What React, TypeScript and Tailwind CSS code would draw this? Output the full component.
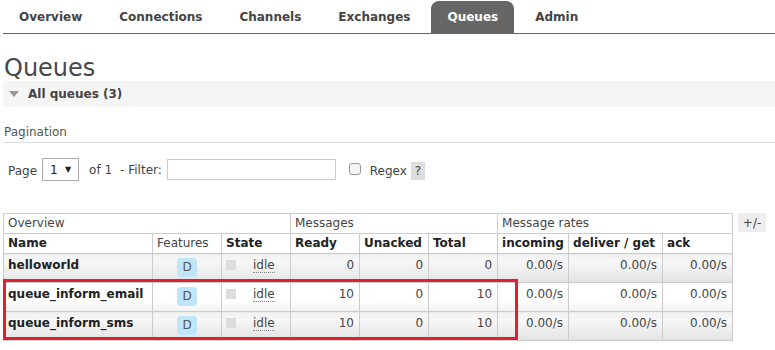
import React from "react";

const tabs = ["Overview", "Connections", "Channels", "Exchanges", "Queues", "Admin"];

type Row = { name: string; ready: string; unacked: string; total: string; alt: 1 | 2 };
const rows: Row[] = [
  { name: "helloworld", ready: "0", unacked: "0", total: "0", alt: 1 },
  { name: "queue_inform_email", ready: "10", unacked: "0", total: "10", alt: 2 },
  { name: "queue_inform_sms", ready: "10", unacked: "0", total: "10", alt: 1 },
];

export default function App() {
  return (
    <div
      className="w-[775px] h-[350px] overflow-hidden bg-white text-[12px] text-[#444] pl-[3px]"
      style={{ fontFamily: '"DejaVu Sans", Verdana, sans-serif' }}
    >
      {/* Menu */}
      <div className="flex gap-[5px] pt-[1px] border-b border-[#666]">
        {tabs.map((t) =>
          t === "Queues" ? (
            <div
              key={t}
              className="h-[32px] px-[16px] flex items-center rounded-t-[8px] bg-[#666] text-white font-bold"
            >
              {t}
            </div>
          ) : (
            <div key={t} className="h-[32px] px-[16px] flex items-center text-[#444] font-bold">
              {t}
            </div>
          )
        )}
      </div>

      <h1 className="mt-[22px] text-[24px] leading-[25px] font-normal text-[#484848] pl-[1px]">Queues</h1>

      <div className="h-[26px] bg-[#f5f5f5] flex items-center pl-[6px] gap-[9px]">
        <svg width="10" height="6" viewBox="0 0 10 6">
          <polygon points="0,0 10,0 5,6" fill="#999" />
        </svg>
        <span className="font-bold text-[#444]">All queues (3)</span>
      </div>

      <div className="mt-[18px] pb-[2px] border-b border-[#ddd] leading-[15px] text-[#555] pl-[1px]">
        Pagination
      </div>

      <div className="mt-[15px] h-[23px] flex items-center pl-[5px] text-[#444]">
        <span className="mt-[2px]">Page</span>
        <div className="ml-[5px] w-[37px] h-[23px] border border-[#aaa] flex items-center justify-between px-[7px]">
          <span className="text-[#222]">1</span>
          <span className="text-[8px] text-[#222]">▼</span>
        </div>
        <span className="ml-[10px]">of 1</span>
        <span className="ml-[8px]">- Filter:</span>
        <div className="ml-[5px] w-[169px] h-[21px] border border-[#ccc]" />
        <div className="ml-[13px] w-[12px] h-[12px] rounded-[3px] border border-[#999] bg-[#f4f4f4] -mt-[2px]" />
        <span className="ml-[9px] mt-[2px]">Regex</span>
        <div className="ml-[4px] w-[14px] h-[18px] bg-[#ddd] flex items-center justify-center mt-[2px]">?</div>
      </div>

      <div className="mt-[32px] flex items-start gap-[5px]">
        <div className="relative">
          <table className="table-fixed border-collapse w-[729px]">
            <colgroup>
              <col className="w-[149px]" />
              <col className="w-[69px]" />
              <col className="w-[69px]" />
              <col className="w-[69px]" />
              <col className="w-[69px]" />
              <col className="w-[69px]" />
              <col className="w-[71px]" />
              <col className="w-[94px]" />
              <col className="w-[70px]" />
            </colgroup>
            <thead>
              <tr className="h-[20px]">
                <th colSpan={3} className="border border-[#ccc] px-[4px] text-left font-normal text-[#444] leading-[15px]">
                  Overview
                </th>
                <th colSpan={3} className="border border-[#ccc] px-[4px] text-left font-normal text-[#444] leading-[15px]">
                  Messages
                </th>
                <th colSpan={3} className="border border-[#ccc] px-[4px] text-left font-normal text-[#444] leading-[15px]">
                  Message rates
                </th>
              </tr>
              <tr className="h-[20px]">
                <th className="border border-[#ccc] px-[4px] text-left font-bold text-[#222] leading-[15px]">Name</th>
                <th className="border border-[#ccc] px-[4px] text-left font-normal text-[#444] leading-[15px]">Features</th>
                <th className="border border-[#ccc] px-[4px] text-left font-bold text-[#222] leading-[15px]">State</th>
                <th className="border border-[#ccc] px-[4px] text-left font-bold text-[#222] leading-[15px]">Ready</th>
                <th className="border border-[#ccc] px-[4px] text-left font-bold text-[#222] leading-[15px]">Unacked</th>
                <th className="border border-[#ccc] px-[4px] text-left font-bold text-[#222] leading-[15px]">Total</th>
                <th className="border border-[#ccc] px-[4px] text-left font-bold text-[#222] leading-[15px]">incoming</th>
                <th className="border border-[#ccc] px-[4px] text-left font-bold text-[#222] leading-[15px] whitespace-nowrap">deliver / get</th>
                <th className="border border-[#ccc] px-[4px] text-left font-bold text-[#222] leading-[15px]">ack</th>
              </tr>
            </thead>
            <tbody>
              {rows.map((r) => {
                const bg =
                  r.alt === 1
                    ? "bg-[linear-gradient(#f2f2f2,#f7f7f7_25%,#ececec_70%,#e2e2e2)]"
                    : "bg-[linear-gradient(#ffffff,#ffffff_60%,#f2f2f2)]";
                const td = `border border-[#ccc] align-top leading-[15px] pt-[4px] ${bg}`;
                return (
                  <tr key={r.name} className="h-[29px]">
                    <td className={`${td} px-[4px] font-bold text-[#222] whitespace-nowrap`}>{r.name}</td>
                    <td className={`${td} px-[4px]`}>
                      <div className="mx-auto w-[20px] h-[19px] rounded-[4px] bg-[#bfe5f8] flex items-center justify-center text-[#555]">
                        D
                      </div>
                    </td>
                    <td className={`${td} px-[4px]`}>
                      <div className="flex items-start">
                        <div className="mt-[2px] w-[10px] h-[10px] bg-[#ddd]" />
                        <span className="ml-[17px] border-b border-dotted border-[#888] leading-[14px] text-[#444]">
                          idle
                        </span>
                      </div>
                    </td>
                    <td className={`${td} pr-[5px] text-right`}>{r.ready}</td>
                    <td className={`${td} pr-[5px] text-right`}>{r.unacked}</td>
                    <td className={`${td} pr-[5px] text-right`}>{r.total}</td>
                    <td className={`${td} pr-[5px] text-right`}>0.00/s</td>
                    <td className={`${td} pr-[5px] text-right`}>0.00/s</td>
                    <td className={`${td} pr-[5px] text-right`}>0.00/s</td>
                  </tr>
                );
              })}
            </tbody>
          </table>
          <div className="absolute left-0 top-[66px] w-[515px] h-[61px] border-[3px] border-[#d9232f] pointer-events-none" />
        </div>
        <div className="w-[28px] h-[19px] bg-[#eee] flex items-center justify-center text-[#444]">+/-</div>
      </div>
    </div>
  );
}
